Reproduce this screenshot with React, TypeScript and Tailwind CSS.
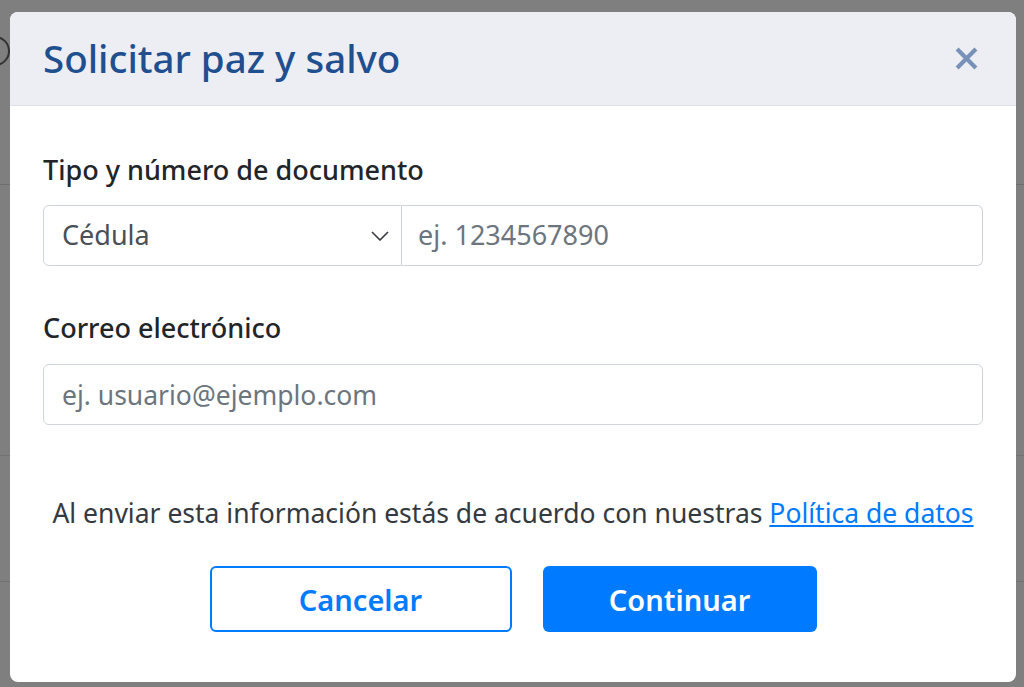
export default function App() {
  const font = { fontFamily: '"Noto Sans", "Open Sans", Arial, sans-serif' };

  return (
    <div className="relative h-[687px] w-full overflow-hidden bg-[#7f7f7f]" style={font}>
      {/* underlying page, dimmed by the backdrop */}
      <div className="flex flex-col">
        <div className="h-[185px] border-b border-[#6f6f6f]">
          <div className="ml-[-20px] mt-[36px] h-[30px] w-[30px] rounded-full border-2 border-[#333]" />
        </div>
        <div className="h-[271px] border-b border-[#727272]" />
        <div className="h-[126px] border-b border-[#727272]" />
      </div>

      {/* modal */}
      <div className="absolute left-[10px] top-[12px] flex h-[670px] w-[1006px] flex-col overflow-hidden rounded-[8px] bg-white">
        <div className="flex h-[94px] shrink-0 items-center justify-between border-b border-[#dde2e8] bg-[#eceef3] pl-[33px] pr-[35px]">
          <h5 className="text-[38.5px] font-medium leading-none text-[#1f4f8f]">Solicitar paz y salvo</h5>
          <button className="flex h-[30px] w-[30px] items-center justify-center">
            <svg width="23" height="23" viewBox="0 0 22 22">
              <path d="M2 2 L20 20 M20 2 L2 20" stroke="#7891b8" strokeWidth="4" strokeLinecap="butt" />
            </svg>
          </button>
        </div>

        <div className="flex flex-col px-[33px] pt-[44px]">
          <label className="h-[40px] text-[27px] font-medium leading-[40px] text-[#212529]">
            Tipo y número de documento
          </label>
          <div className="mt-[15px] flex h-[61px]">
            <div className="flex w-[359px] items-center justify-between rounded-l-[6px] border border-[#ced4da] pl-[18px] pr-[12px] text-[27px] text-[#495057]">
              <span>Cédula</span>
              <svg width="18" height="10" viewBox="0 0 18 10">
                <path d="M1 1 L9 9 L17 1" fill="none" stroke="#343a40" strokeWidth="1.6" />
              </svg>
            </div>
            <div className="flex flex-1 items-center rounded-r-[6px] border border-l-0 border-[#ced4da] pl-[16px] text-[27px] text-[#6c757d]">
              ej. 1234567890
            </div>
          </div>

          <label className="mt-[42px] h-[40px] text-[27px] font-medium leading-[40px] text-[#212529]">
            Correo electrónico
          </label>
          <div className="mt-[16px] flex h-[61px] items-center rounded-[6px] border border-[#ced4da] pl-[18px] pt-[3px] text-[26.5px] text-[#6c757d]">
            ej. usuario@ejemplo.com
          </div>

          <p className="mt-[68px] h-[40px] text-center text-[26.5px] leading-[40px] text-[#343a40]">
            Al enviar esta información estás de acuerdo con nuestras{" "}
            <a className="text-[#007bff] underline">Política de datos</a>
          </p>

          <div className="mt-[33px] flex justify-center gap-[31px]">
            <button className="h-[66px] w-[302px] rounded-[6px] border-2 border-[#007bff] bg-white pt-[2px] text-[29px] font-semibold text-[#007bff]">
              Cancelar
            </button>
            <button className="h-[66px] w-[274px] rounded-[6px] bg-[#007bff] pt-[2px] text-[29px] font-semibold text-white">
              Continuar
            </button>
          </div>
        </div>
      </div>
    </div>
  );
}
